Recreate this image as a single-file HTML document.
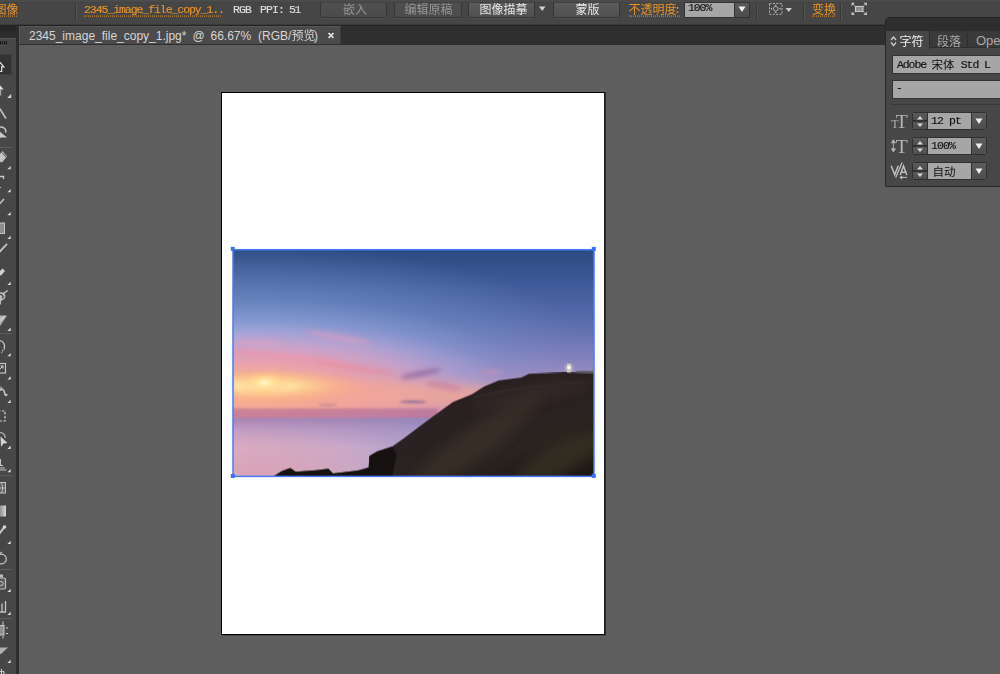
<!DOCTYPE html>
<html><head><meta charset="utf-8">
<style>
*{margin:0;padding:0;box-sizing:border-box}
html,body{width:1000px;height:674px;overflow:hidden;background:#5e5e5e}
body{position:relative;font-family:"Liberation Sans",sans-serif;}
.a{position:absolute}
.mono{font-family:"Liberation Mono",monospace;font-size:11.5px;letter-spacing:-0.9px;white-space:pre;line-height:12px;will-change:transform;-webkit-text-stroke:0.15px}
#cbar{left:0;top:0;width:1000px;height:24px;background:linear-gradient(#4c4c4c 0,#4b4b4b 2px,#434343 2px,#434343 3px,#464646 3px,#464646 100%)}
#cline{left:0;top:24px;width:1000px;height:2px;background:linear-gradient(#3a3a3a 50%,#242424 50%)}
#tabstrip{left:19px;top:26px;width:981px;height:19px;background:#2f2f2f}
#tab{left:19px;top:26px;width:322px;height:18px;background:#4b4b4b;border-top:1px solid #565656;border-left:1px solid #585858;border-right:1px solid #3a3a3a}
.tt{top:29px;font-size:12px;line-height:14px;color:#d6d6d6;white-space:pre}
#canvas{left:19px;top:45px;width:981px;height:629px;background:#5e5e5e}
#tbhead{left:0;top:26px;width:16px;height:12px;background:linear-gradient(#242424,#2f2f2f)}
#tb{left:0;top:38px;width:17px;height:636px;background:#474747;border-top:1px solid #565656;border-right:1px solid #3a3a3a}
#tbgap{left:16px;top:26px;width:3px;height:648px;background:#2d2d2d}
.btn{top:2px;height:16px;border:1px solid #363636;border-top-color:#424242;border-radius:2px;background:linear-gradient(#5b5b5b,#505050);box-shadow:0 1px 0 #515151}
.btn.dis{background:linear-gradient(#4f4f4f,#4b4b4b)}
.sep{top:3px;width:2px;height:18px;border-left:1px solid #383838;border-right:1px solid #525252}
.ul{height:1px;background-image:linear-gradient(90deg,#e8932b 50%,transparent 50%);background-size:2px 1px}
#artboard{left:221px;top:92px;width:384px;height:543px;background:#fff;border:1px solid #000;border-right-color:#1c1c1c;box-shadow:1px 0 0 #2e2e2e,1px 1px 0 #484848}
#photo{left:233px;top:250px;width:361px;height:227px}
#sel{left:232px;top:249px;width:363px;height:228px;border:1px solid #4d7cf5}
.h{width:4px;height:4px;background:#3f72f5}
#panel{left:885px;top:17px;width:120px;height:170px;background:#474747;border:1px solid #262626;border-radius:4px 0 0 0}
.fld{background:#a6a6a6;border:1px solid #333}
</style></head><body>
<div class="a" id="canvas"></div>
<div class="a" id="cbar"></div>
<div class="a" id="cline"></div>
<div class="a" id="tabstrip"></div>
<div class="a" id="tab"></div>
<div class="a tt" style="left:29px">2345_image_file_copy_1.jpg*</div>
<div class="a tt" style="left:192.5px">@</div>
<div class="a tt" style="left:210.500px">66.67%</div>
<div class="a tt" style="left:258px">(RGB/</div>
<div class="a tt" style="left:314px">)</div>
<div class="a" id="tbhead"></div>
<div class="a" id="tb"></div>
<div class="a" id="tbgap"></div>

<!-- control bar widgets -->
<div class="a sep" style="left:75px"></div>
<div class="a mono" style="left:84px;top:4px;color:#e8932b;letter-spacing:-1.07px">2345_image_file_copy_1..</div>
<div class="a mono" style="left:233px;top:4px;color:#dcdcdc">RGB</div>
<div class="a mono" style="left:260px;top:4px;color:#dcdcdc">PPI:</div>
<div class="a mono" style="left:288.5px;top:4px;color:#dcdcdc;letter-spacing:-1.5px">51</div>
<div class="a btn dis" style="left:320px;width:67px"></div>
<div class="a btn dis" style="left:394px;width:68px"></div>
<div class="a btn" style="left:468px;width:67px"></div>
<div class="a btn" style="left:553px;width:67px"></div>
<div class="a mono" style="left:673.5px;top:4px;color:#e8932b">:</div>
<div class="a fld" style="left:684px;top:2px;width:51px;height:16px"></div>
<div class="a mono" style="left:688px;top:2px;color:#111;letter-spacing:-1.1px">100%</div>
<div class="a" style="left:735px;top:2px;width:15px;height:16px;background:linear-gradient(#5a5a5a,#4c4c4c);border:1px solid #333;border-left:0"></div>
<div class="a sep" style="left:756px"></div>
<div class="a sep" style="left:803px"></div>
<div class="a sep" style="left:840px"></div>

<!-- artboard -->
<div class="a" id="artboard"></div>
<svg class="a" id="photo" viewBox="21 26 950 595" preserveAspectRatio="none">
<defs>
<linearGradient id="sky" x1="0" y1="0" x2="0" y2="1">
<stop offset="0" stop-color="#2c4a82"/>
<stop offset="0.2" stop-color="#3e5a98"/>
<stop offset="0.4" stop-color="#566aaa"/>
<stop offset="0.55" stop-color="#7078b6"/>
<stop offset="0.7" stop-color="#9088c0"/>
<stop offset="0.82" stop-color="#b094c0"/>
<stop offset="0.93" stop-color="#c48cac"/>
<stop offset="1" stop-color="#b47a9e"/>
</linearGradient>
<linearGradient id="skyl" x1="0" y1="0" x2="1" y2="0">
<stop offset="0" stop-color="#8cb2e6" stop-opacity="0.42"/>
<stop offset="0.45" stop-color="#8cb2e6" stop-opacity="0.24"/>
<stop offset="0.9" stop-color="#8cb2e6" stop-opacity="0"/>
</linearGradient>
<radialGradient id="skyl2" cx="0.5" cy="0.5" r="0.5">
<stop offset="0" stop-color="#94b6ea" stop-opacity="0.6"/>
<stop offset="0.5" stop-color="#8cb2e6" stop-opacity="0.34"/>
<stop offset="1" stop-color="#8cb2e6" stop-opacity="0"/>
</radialGradient>
<radialGradient id="glow" cx="0.5" cy="0.5" r="0.5">
<stop offset="0" stop-color="#ffcc94" stop-opacity="1"/>
<stop offset="0.18" stop-color="#f9b292" stop-opacity="0.95"/>
<stop offset="0.4" stop-color="#f2a0a4" stop-opacity="0.85"/>
<stop offset="0.65" stop-color="#e8a0bc" stop-opacity="0.55"/>
<stop offset="0.85" stop-color="#d4a4d0" stop-opacity="0.22"/>
<stop offset="1" stop-color="#c0a4d8" stop-opacity="0"/>
</radialGradient>
<radialGradient id="haze" cx="0.5" cy="0.5" r="0.5">
<stop offset="0" stop-color="#c8b4e4" stop-opacity="0.75"/>
<stop offset="0.5" stop-color="#b8b0e0" stop-opacity="0.45"/>
<stop offset="1" stop-color="#a0a8dc" stop-opacity="0"/>
</radialGradient>
<radialGradient id="seapink" cx="0.5" cy="0.5" r="0.5">
<stop offset="0" stop-color="#d898a8" stop-opacity="0.6"/>
<stop offset="0.6" stop-color="#d898a8" stop-opacity="0.3"/>
<stop offset="1" stop-color="#d898a8" stop-opacity="0"/>
</radialGradient>
<radialGradient id="sun" cx="0.5" cy="0.5" r="0.5">
<stop offset="0" stop-color="#fff6c8" stop-opacity="1"/>
<stop offset="0.3" stop-color="#ffe29c" stop-opacity="0.9"/>
<stop offset="0.65" stop-color="#ffc888" stop-opacity="0.45"/>
<stop offset="1" stop-color="#fbb080" stop-opacity="0"/>
</radialGradient>
<linearGradient id="sea" x1="0" y1="0" x2="0" y2="1">
<stop offset="0" stop-color="#a883b2"/>
<stop offset="0.2" stop-color="#c29cc2"/>
<stop offset="0.5" stop-color="#dcb4ce"/>
<stop offset="1" stop-color="#deb6cc"/>
</linearGradient>
<linearGradient id="sear" x1="0" y1="0" x2="1" y2="0">
<stop offset="0" stop-color="#8088c4" stop-opacity="0"/>
<stop offset="0.3" stop-color="#8088c4" stop-opacity="0.2"/>
<stop offset="0.6" stop-color="#8088c4" stop-opacity="0.55"/>
<stop offset="1" stop-color="#8088c4" stop-opacity="0.7"/>
</linearGradient>
<linearGradient id="hill" x1="0" y1="0" x2="1" y2="1">
<stop offset="0" stop-color="#1b1519"/>
<stop offset="0.45" stop-color="#2a2123"/>
<stop offset="0.75" stop-color="#2b2420"/>
<stop offset="1" stop-color="#1c1616"/>
</linearGradient>
<filter id="b12" x="-50%" y="-100%" width="200%" height="300%"><feGaussianBlur stdDeviation="14"/></filter>
<filter id="b6"><feGaussianBlur stdDeviation="6"/></filter>
<filter id="b3"><feGaussianBlur stdDeviation="3"/></filter>
<clipPath id="seaclip"><rect x="21" y="466" width="950" height="155"/></clipPath>
<clipPath id="hillclip"><polygon points="125,621 150,605 172,597 186,607 240,603 272,599 284,612 350,604 378,596 380,566 400,554 440,541 470,520 510,490 548,462 600,424 650,404 682,384 720,368 780,360 800,350 895,347 971,349 971,621"/></clipPath>
<clipPath id="skyclip"><rect x="21" y="26" width="950" height="442"/></clipPath>
</defs>
<rect x="21" y="26" width="950" height="442" fill="url(#sky)"/>
<ellipse cx="21" cy="250" rx="900" ry="240" fill="url(#skyl2)" clip-path="url(#skyclip)"/>
<g clip-path="url(#skyclip)">
<ellipse cx="120" cy="330" rx="640" ry="170" fill="url(#haze)"/>
<ellipse cx="80" cy="395" rx="680" ry="180" fill="url(#glow)"/>
<ellipse cx="300" cy="408" rx="470" ry="38" fill="#f6a890" opacity="0.7" filter="url(#b12)"/>
<ellipse cx="105" cy="382" rx="260" ry="45" fill="url(#sun)"/>
<ellipse cx="105" cy="374" rx="70" ry="34" fill="url(#sun)"/>
<!-- clouds -->
<g filter="url(#b6)">
<ellipse cx="300" cy="255" rx="90" ry="9" fill="#e89ab8" opacity="0.45" transform="rotate(10 300 255)"/>
<ellipse cx="150" cy="305" rx="160" ry="9" fill="#f090a8" opacity="0.55" transform="rotate(6 150 305)"/>
<ellipse cx="340" cy="335" rx="110" ry="8" fill="#ee8898" opacity="0.5" transform="rotate(8 340 335)"/>
<ellipse cx="515" cy="350" rx="55" ry="8" fill="#8a6498" opacity="0.7" transform="rotate(-12 515 350)"/>
<ellipse cx="575" cy="382" rx="50" ry="9" fill="#c87c9c" opacity="0.55" transform="rotate(10 575 382)"/>
<ellipse cx="700" cy="345" rx="30" ry="5" fill="#e090a8" opacity="0.45"/>
<ellipse cx="80" cy="268" rx="80" ry="8" fill="#e8a0c0" opacity="0.35"/>
</g>
<g filter="url(#b3)">
<ellipse cx="495" cy="424" rx="35" ry="3.5" fill="#7a6298" opacity="0.8"/>
<ellipse cx="270" cy="432" rx="25" ry="2.5" fill="#a8708c" opacity="0.6"/>
<rect x="0" y="441" width="560" height="30" fill="#b06c94" opacity="0.6"/>
</g>
</g>
<rect x="21" y="466" width="950" height="155" fill="url(#sea)"/>
<rect x="21" y="466" width="950" height="155" fill="url(#sear)"/>
<ellipse cx="60" cy="610" rx="380" ry="120" fill="url(#seapink)" clip-path="url(#seaclip)"/>
<polygon fill="url(#hill)" points="125,621 150,605 172,597 186,607 240,603 272,599 284,612 350,604 378,596 380,566 400,554 440,541 470,520 510,490 548,462 600,424 650,404 682,384 720,368 780,360 800,350 895,347 971,349 971,621"/>
<polygon fill="#120d0e" opacity="0.75" points="125,621 150,605 172,597 186,607 240,603 272,599 284,612 350,604 378,596 380,566 400,554 440,541 452,560 440,621"/>
<g clip-path="url(#hillclip)">
<ellipse cx="660" cy="530" rx="210" ry="42" fill="#3c3529" opacity="0.6" filter="url(#b12)" transform="rotate(-36 660 530)"/>
<ellipse cx="880" cy="575" rx="130" ry="38" fill="#3d3b27" opacity="0.55" filter="url(#b12)" transform="rotate(-28 880 575)"/>
<ellipse cx="800" cy="405" rx="160" ry="22" fill="#3a2d2b" opacity="0.55" filter="url(#b12)" transform="rotate(-10 800 405)"/>
</g>
<path d="M655 412C720 395 800 380 968 372" stroke="#3c3230" stroke-width="3" fill="none" opacity="0.7"/>
<circle cx="905" cy="335" r="10" fill="#fff8d0" opacity="0.45" filter="url(#b3)"/>
<rect x="900" y="324" width="10" height="23" fill="#cfc8bc"/>
<circle cx="905" cy="334" r="4.500" fill="#ffffff"/>
<rect x="925" y="343" width="44" height="5" fill="#5a5450"/>
</svg>


<!-- panel -->
<div class="a" id="panel"></div>
<div class="a" style="left:886px;top:18px;width:114px;height:13px;background:#2e2e2e;border-radius:3px 0 0 0"></div>
<div class="a" style="left:886px;top:31px;width:114px;height:17px;background:#3a3a3a;border-bottom:1px solid #2e2e2e"></div>
<div class="a" style="left:886px;top:31px;width:44px;height:18px;background:#474747;border-right:1px solid #2e2e2e"></div>
<div class="a" style="left:967px;top:31px;width:1px;height:17px;background:#2e2e2e"></div>
<div class="a" style="left:976px;top:34px;font-size:13px;line-height:14px;color:#a8a8a8">Ope</div>
<div class="a fld" style="left:892px;top:55px;width:112px;height:19px"></div>
<div class="a mono" style="left:896.500px;top:59px;color:#101010;letter-spacing:-1.1px">Adobe      Std L</div>
<div class="a fld" style="left:892px;top:80px;width:112px;height:19px"></div>
<div class="a mono" style="left:896px;top:82px;color:#101010">-</div>
<div class="a" style="left:891px;top:104px;width:110px;height:1px;background:#3a3a3a"></div>
<!-- rows -->
<div class="a row" style="top:112px"></div>
<div class="a row" style="top:137px"></div>
<div class="a row" style="top:162px"></div>
<div class="a mono" style="left:931px;top:115px;color:#101010">12 pt</div>
<div class="a mono" style="left:931px;top:140px;color:#101010">100%</div>
<style>
.row{left:912px;width:75px;height:18px;border:1px solid #303030;background:#a6a6a6;border-radius:2px;overflow:hidden}
.row:before{content:"";position:absolute;left:0;top:0;width:14px;height:16px;background:linear-gradient(#5a5a5a 0,#4e4e4e 46%,#2e2e2e 47%,#2e2e2e 53%,#5a5a5a 54%,#4e4e4e);border-right:1px solid #303030}
.row:after{content:"";position:absolute;right:0;top:0;width:14px;height:16px;background:linear-gradient(#5c5c5c,#4e4e4e);border-left:1px solid #303030}
</style>

<svg class="a" style="left:0;top:0;pointer-events:none" width="1000" height="674" viewBox="0 0 1000 674">
<g font-family="'Liberation Sans','Noto Sans CJK SC',sans-serif" font-size="12">
<text x="-5.500" y="13.500" fill="#e8932b">图像</text>
<text x="343" y="13.500" fill="#969696">嵌入</text>
<text x="404.500" y="13.500" fill="#969696">编辑原稿</text>
<text x="479.500" y="13.500" fill="#e6e6e6">图像描摹</text>
<text x="575.500" y="13.500" fill="#e6e6e6">蒙版</text>
<text x="628.500" y="13.500" fill="#e8932b">不透明度</text>
<text x="812" y="13.500" fill="#e8932b">变换</text>
<text x="291.500" y="40" fill="#d6d6d6">预览</text>
<text x="899.500" y="45.500" fill="#f0f0f0">字符</text>
<text x="937" y="45.500" fill="#a8a8a8">段落</text>
<text x="931.500" y="68.700" font-size="11.500" fill="#101010">宋体</text>
<text x="932.500" y="175.500" font-size="11.500" fill="#101010">自动</text>
</g>
<!-- tab close -->
<path d="M328.500 31.800l5 5M333.500 31.800l-5 5" stroke="#2a2a2a" stroke-width="1.800" fill="none"/><path d="M328.500 32.800l5 5M333.500 32.800l-5 5" stroke="#dedede" stroke-width="1.800" fill="none"/>
<!-- dropdown arrows control bar -->
<path d="M539 6.500h6.500l-3.250 4.500z" fill="#d0d0d0"/>
<path d="M738.500 6.500h7l-3.500 5.500z" fill="#f0f0f0"/>
<path d="M785.500 8h6.500l-3.250 4z" fill="#c8c8c8"/>
<!-- dashed rect icon -->
<rect x="769.500" y="3.500" width="12.500" height="10.800" fill="none" stroke="#b4b4b4" stroke-width="1" stroke-dasharray="2 1.400"/>
<circle cx="775.700" cy="8.800" r="2.300" fill="none" stroke="#b8b8b8" stroke-width="0.900"/>
<path d="M770.900 7.600l1.700 1.200l-1.700 1.200zM780.500 7.600l-1.700 1.200l1.700 1.200zM774.500 4.700l1.200 1.500l1.200-1.500zM774.500 12.900l1.200-1.500l1.200 1.500z" fill="#b8b8b8"/>
<!-- transform icon -->
<rect x="855.500" y="6.400" width="7.500" height="5" fill="#8c8c8c" stroke="#d0d0d0" stroke-width="1"/>
<path d="M851.600 2.800h3.200l-3.200 3.200zM866.800 2.800h-3.200l3.200 3.200zM851.600 15h3.200l-3.200-3.200zM866.800 15h-3.200l3.200-3.200z" fill="#d4d4d4"/>
<path d="M852.800 4l2.600 2.400M865.600 4l-2.600 2.400M852.800 13.800l2.600-2.400M865.600 13.800l-2.600-2.400" stroke="#bdbdbd" stroke-width="0.800"/>
<!-- panel tab updown arrows -->
<path d="M891 40l2.500-3 2.500 3M891 42.500l2.500 3 2.500-3" fill="none" stroke="#d0d0d0" stroke-width="1.200"/>
<!-- spinner arrows & dropdown arrows in panel rows -->
<g fill="#d8d8d8">
<path d="M917 119.500h6l-3-3.500zM917 123.500h6l-3 3.500z"/>
<path d="M917 144.500h6l-3-3.500zM917 148.500h6l-3 3.500z"/>
<path d="M917 169.500h6l-3-3.500zM917 173.500h6l-3 3.500z"/>
</g>
<g fill="#f0f0f0">
<path d="M975.500 118.500h7l-3.500 5.500z"/>
<path d="M975.500 143.500h7l-3.500 5.500z"/>
<path d="M975.500 168.500h7l-3.500 5.500z"/>
</g>
<!-- panel icons -->
<g fill="#b4b4b4" font-family="Liberation Serif">
<text x="891.300" y="128" font-size="12">T</text>
<text x="895.800" y="128" font-size="19.500">T</text>
<text x="895.800" y="152.500" font-size="19.500">T</text>
</g>
<path d="M893.400 140v11.500M891.400 142.800l2-3 2 3zM891.400 148.800l2 3 2-3z" stroke="#b4b4b4" fill="#b4b4b4" stroke-width="0.900"/>
<g stroke="#c0c0c0" fill="none">
<path d="M891.200 165.800L894.700 174.800L898.200 165.800" stroke-width="1.500"/>
<path d="M902 162.600L895.700 177.600" stroke-width="1.300"/>
<path d="M900.200 175L903.500 166L906.800 175M901.600 172.200H905.400" stroke-width="1.500"/>
<path d="M900 177.400H907" stroke-width="1"/>
<path d="M899.400 177.400l2.800-2v4z" fill="#c0c0c0" stroke="none"/>
</g>
<!-- dotted underlines -->
<path d="M0 16.100H18M84 16.100H222M629 16.100H680M812 16.100H836" stroke="#e8932b" stroke-width="1" stroke-dasharray="1 1" fill="none"/>
<!-- selection -->
<rect x="233" y="249.700" width="361" height="226.700" fill="none" stroke="#4c7af5" stroke-width="1.500"/>
<g fill="#3b6ef5"><rect x="230.800" y="246.900" width="4" height="4"/><rect x="591.800" y="246.900" width="4" height="4"/><rect x="230.800" y="473.900" width="4" height="4"/><rect x="591.800" y="473.900" width="4" height="4"/></g>
<g id="tools">
<!-- grip -->
<path d="M0.500 41.200v3.300M2.600 41.200v3.300M4.600 41.200v3.300M6.500 41.200v3.300" stroke="#121212" stroke-width="1"/><path d="M0.500 45v0.800M2.600 45v0.800M4.600 45v0.800M6.500 45v0.800" stroke="#5c5c5c" stroke-width="1"/>
<!-- selected tool box -->
<rect x="-2" y="54.500" width="13.500" height="20" fill="#333333" stroke="#3e3e3e" stroke-width="1"/>
<path d="M-3 66.800L0.300 62.800L3.800 66.800H1.700V71.500H-3" fill="none" stroke="#e4e4e4" stroke-width="1.200"/>
<!-- direct select -->
<path d="M-3 89.500L0 85.300L3.600 89.500z" fill="#e4e4e4"/><path d="M-1 89.500H1.200V95.500H-1z" fill="#a8a8a8"/>
<!-- magic wand -->
<path d="M-1 107.500L6 118.500" stroke="#c0c0c0" stroke-width="1.600"/>
<!-- lasso -->
<path d="M-2 127.500C3 126 7 129 5.500 132.500" fill="none" stroke="#c8c8c8" stroke-width="1.400"/>
<path d="M-2 130L7 137.500H1L-2 139z" fill="#c8c8c8"/>
<!-- separators -->
<path d="M0 147.500H12M0 333.500H12M0 475.500H12M0 569.500H12M0 618.500H12" stroke="#5c5c5c" stroke-width="1"/>
<!-- pen -->
<path d="M-2 156L2.500 151L7 156.500L2 162.500L-2 161z" fill="#c4c4c4"/>
<path d="M2 152.500L6 157" stroke="#4a4a4a" stroke-width="1"/>
<!-- type -->
<path d="M-1 176.500H3.500V179" fill="none" stroke="#c8c8c8" stroke-width="1.400"/>
<path d="M-1 187.500H1" stroke="#c8c8c8" stroke-width="1.200"/>
<!-- line -->
<path d="M-1 204.500L4 199" stroke="#c8c8c8" stroke-width="1.400"/>
<!-- rect -->
<rect x="-2" y="223" width="6.500" height="10.500" fill="#8e8e8e" stroke="#c4c4c4" stroke-width="1"/>
<!-- brush -->
<path d="M-1 252.500L6.500 244.500" stroke="#c8c8c8" stroke-width="1.800" stroke-linecap="round"/>
<!-- pencil/blob -->
<path d="M-1 272L2.500 268.500L5 271L1 275.500L-1 275z" fill="#d0d0d0"/>
<!-- eraser-like -->
<path d="M-1 292.500C4 291 7 295 4.500 299L1 301V304.500H-1z" fill="#bcbcbc"/>
<path d="M3 294L7.500 290.500" stroke="#d0d0d0" stroke-width="1.200"/>
<path d="M-1 294.500C2 294 4 296 2.500 298.500" fill="none" stroke="#444" stroke-width="1.400"/>
<!-- gradient-ish shape -->
<path d="M-1 315.500H7L0 326H-1z" fill="#b4b4b4"/>
<path d="M-1 321.500L5 316" stroke="#e0e0e0" stroke-width="1"/>
<!-- rotate -->
<path d="M-1 340.500C3.500 340.500 5.500 345 4 349.500" fill="none" stroke="#c4c4c4" stroke-width="1.300"/>
<path d="M3 350L1.500 353" stroke="#c4c4c4" stroke-width="1.300" stroke-dasharray="1.500 1"/>
<!-- scale -->
<rect x="-2" y="363.500" width="7.500" height="9.500" fill="none" stroke="#c4c4c4" stroke-width="1.200"/>
<path d="M-1 370L3 366M0.500 366H3V368.500" fill="none" stroke="#d8d8d8" stroke-width="1"/>
<!-- width tool -->
<path d="M-1 391C2 388 4 389.500 4.500 392.500C5 395.500 6.500 396.500 7 394" fill="none" stroke="#c4c4c4" stroke-width="1.600"/>
<circle cx="1" cy="388" r="1" fill="none" stroke="#c4c4c4" stroke-width="0.800"/>
<!-- free transform -->
<rect x="-2" y="411" width="7" height="10" fill="none" stroke="#d0d0d0" stroke-width="1.200" stroke-dasharray="2.500 1.500"/>
<!-- shape builder -->
<path d="M-1 432.500C3 432 5.500 435 5 438" fill="none" stroke="#a8a8a8" stroke-width="1.400"/>
<path d="M0.500 436.500L7.500 443L3.500 443.500L1 447z" fill="#d4d4d4"/>
<!-- perspective grid -->
<path d="M-1 465.500H3M-1 468H5M-1 470H6.500M0.500 459V465.500" fill="none" stroke="#c8c8c8" stroke-width="1"/>
<!-- mesh -->
<rect x="-2" y="482.500" width="7.500" height="10.500" fill="#666" stroke="#c0c0c0" stroke-width="1"/>
<path d="M-1 488H5.500M1.500 483C3 486 3 490 1.500 493" fill="none" stroke="#c0c0c0" stroke-width="0.900"/>
<!-- gradient -->
<linearGradient id="tg" x1="0" y1="0" x2="1" y2="0"><stop offset="0" stop-color="#7a7a7a"/><stop offset="1" stop-color="#d8d8d8"/></linearGradient>
<rect x="-2" y="505.500" width="8" height="11" fill="url(#tg)"/>
<!-- eyedropper -->
<path d="M-1 534L4 527.500" stroke="#c0c0c0" stroke-width="2.200" stroke-linecap="round"/>
<circle cx="4.500" cy="527" r="1.800" fill="#d8d8d8"/>
<!-- blend -->
<circle cx="1.500" cy="559" r="4.800" fill="none" stroke="#c0c0c0" stroke-width="1.300"/>
<path d="M0 553.500L2 552" stroke="#c0c0c0" stroke-width="1.200"/>
<!-- symbol sprayer -->
<rect x="-2" y="578" width="7.500" height="11" rx="1.500" fill="#5a5a5a" stroke="#c0c0c0" stroke-width="1.200"/>
<rect x="-1" y="574.500" width="4" height="3" fill="#c0c0c0"/>
<ellipse cx="0.500" cy="583.500" rx="2.800" ry="2" fill="none" stroke="#d0d0d0" stroke-width="1"/>
<!-- column graph -->
<path d="M-1 601V612H2V603.500M2 612H5.500V601" fill="none" stroke="#c4c4c4" stroke-width="1.300"/>
<!-- artboard -->
<rect x="-2" y="625.500" width="6" height="9.500" fill="#909090" stroke="#c8c8c8" stroke-width="1"/>
<path d="M3 621.500V625M6 628H8M6 633.500H8M3 636V638.500" stroke="#d0d0d0" stroke-width="1"/>
<!-- slice -->
<path d="M-1 647.500H8L1 654H-1z" fill="#b0b0b0"/>
<!-- hand -->
<path d="M-1 671.500H4M1.500 669V674M4 671.500V674" stroke="#c8c8c8" stroke-width="1.200" fill="none"/>
<!-- small triangles -->
<g fill="#dcdcdc">
<path d="M11.200 94v4h-4z"/>
<path d="M10.700 166v3.300h-3.300z"/>
<path d="M10.700 189v3.300h-3.300z"/>
<path d="M10.700 212v3.300h-3.300z"/>
<path d="M10.700 235.800v3.300h-3.300z"/>
<path d="M10.700 281.800v3.300h-3.300z"/>
<path d="M10.700 327.600v3.300h-3.300z"/>
<path d="M10.700 353v3.300h-3.300z"/>
<path d="M10.700 376.200v3.300h-3.300z"/>
<path d="M10.700 399.800v3.300h-3.300z"/>
<path d="M10.700 445.600v3.300h-3.300z"/>
<path d="M10.700 469v3.300h-3.300z"/>
<path d="M10.700 540.800v3.300h-3.300z"/>
<path d="M10.700 588.800v3.300h-3.300z"/>
<path d="M10.700 611.800v3.300h-3.300z"/>
<path d="M10.700 659.800v3.300h-3.300z"/>
</g>
</g>

</svg>
</body></html>
